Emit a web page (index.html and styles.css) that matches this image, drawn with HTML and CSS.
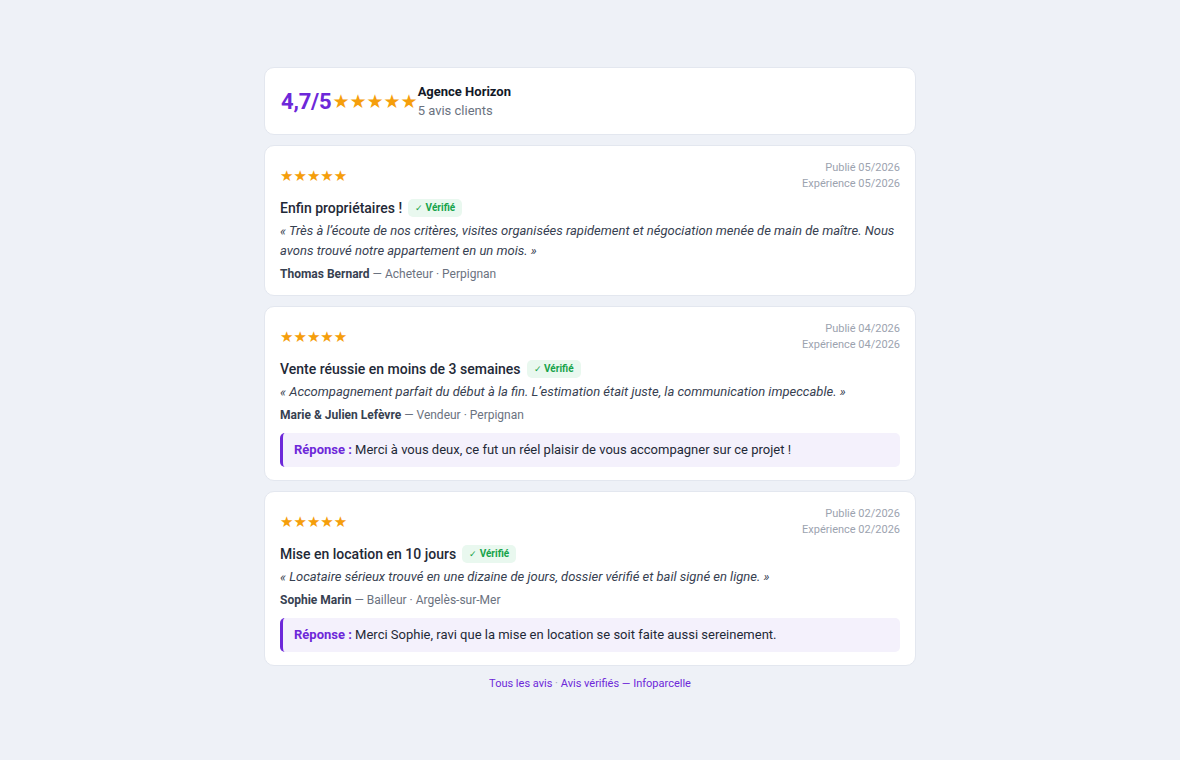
FILE: index.html
```html
<!DOCTYPE html>
<html lang="fr">
<head>
<meta charset="utf-8">
<title>Avis clients — Agence Horizon</title>
<link rel="stylesheet" href="styles.css">
</head>
<body>
<main class="wrap">
  <section class="card summary">
    <div class="score">4,7/5</div>
    <div class="stars stars-lg">★★★★★</div>
    <div class="agency">
      <div class="agency-name">Agence Horizon</div>
      <div class="agency-count">5 avis clients</div>
    </div>
  </section>

  <article class="card review">
    <div class="review-head">
      <div class="stars">★★★★★</div>
      <div class="dates"><div>Publié 05/2026</div><div>Expérience 05/2026</div></div>
    </div>
    <div class="title-row"><h3 class="title">Enfin propriétaires !</h3><span class="badge"><span class="check">✓</span> Vérifié</span></div>
    <p class="quote">« Très à l’écoute de nos critères, visites organisées rapidement et négociation menée de main de maître. Nous avons trouvé notre appartement en un mois. »</p>
    <div class="author"><strong>Thomas Bernard</strong> — Acheteur · Perpignan</div>
  </article>

  <article class="card review">
    <div class="review-head">
      <div class="stars">★★★★★</div>
      <div class="dates"><div>Publié 04/2026</div><div>Expérience 04/2026</div></div>
    </div>
    <div class="title-row"><h3 class="title">Vente réussie en moins de 3 semaines</h3><span class="badge"><span class="check">✓</span> Vérifié</span></div>
    <p class="quote">« Accompagnement parfait du début à la fin. L’estimation était juste, la communication impeccable. »</p>
    <div class="author"><strong>Marie &amp; Julien Lefèvre</strong> — Vendeur · Perpignan</div>
    <div class="reply"><strong>Réponse :</strong> Merci à vous deux, ce fut un réel plaisir de vous accompagner sur ce projet !</div>
  </article>

  <article class="card review">
    <div class="review-head">
      <div class="stars">★★★★★</div>
      <div class="dates"><div>Publié 02/2026</div><div>Expérience 02/2026</div></div>
    </div>
    <div class="title-row"><h3 class="title">Mise en location en 10 jours</h3><span class="badge"><span class="check">✓</span> Vérifié</span></div>
    <p class="quote">« Locataire sérieux trouvé en une dizaine de jours, dossier vérifié et bail signé en ligne. »</p>
    <div class="author"><strong>Sophie Marin</strong> — Bailleur · Argelès-sur-Mer</div>
    <div class="reply"><strong>Réponse :</strong> Merci Sophie, ravi que la mise en location se soit faite aussi sereinement.</div>
  </article>

  <footer class="foot"><a href="#">Tous les avis</a> · <a href="#">Avis vérifiés — Infoparcelle</a></footer>
</main>
</body>
</html>
```
FILE: styles.css
```css
* { box-sizing: border-box; }
html, body { margin: 0; padding: 0; }
body {
  background: #eef1f7;
  font-family: Roboto, "Liberation Sans", sans-serif;
  color: #1f2937;
}
.wrap {
  width: 652px;
  margin: 0 auto;
  padding-top: 67px;
  display: flex;
  flex-direction: column;
  gap: 10px;
}
.card {
  background: #fff;
  border: 1px solid #e3e7ef;
  border-radius: 10px;
}
.summary {
  display: flex;
  align-items: center;
  gap: 1px;
  padding: 15px 16px;
  height: 68px;
}
.score {
  font-size: 22px;
  font-weight: 700;
  color: #6d28d9;
  letter-spacing: -0.2px;
}
.stars {
  color: #f59e0b;
  font-family: "DejaVu Sans", sans-serif;
  font-size: 15px;
  letter-spacing: 0;
  line-height: 1;
}
.stars-lg { font-size: 19px; }
.agency { margin-top: 2px; margin-left: -1px; }
.agency-name { font-size: 13px; font-weight: 700; color: #111827; line-height: 18px; }
.agency-count { font-size: 13px; color: #6b7280; line-height: 20px; }

.review { padding: 14px 15px 13px 15px; }
.review-head {
  display: flex;
  justify-content: space-between;
  align-items: center;
}
.dates {
  text-align: right;
  font-size: 11px;
  line-height: 16px;
  color: #9ca3af;
}
.title-row {
  display: flex;
  align-items: center;
  gap: 6px;
  margin-top: 6px;
}
.title {
  margin: 0;
  font-size: 14px;
  font-weight: 500;
  color: #1f2937;
  line-height: 20px;
}
.badge {
  background: #e9f8ef;
  color: #16a34a;
  font-size: 10px;
  font-weight: 700;
  line-height: 18px;
  padding: 0 7px;
  border-radius: 5px;
}
.check { font-weight: 400; font-size: 9px; }
.quote {
  margin: 3px 0 0;
  font-size: 13px;
  font-style: italic;
  line-height: 20px;
  color: #374151;
}
.author {
  margin-top: 5px;
  font-size: 12px;
  line-height: 16px;
  color: #6b7280;
}
.author strong { color: #374151; font-weight: 700; }
.reply {
  margin-top: 10px;
  background: #f4f1fc;
  border-left: 3px solid #6d28d9;
  border-radius: 5px;
  padding: 0 11px;
  line-height: 34px;
  font-size: 13px;
  color: #1f2937;
}
.reply strong { color: #6d28d9; font-weight: 700; }
.foot {
  text-align: center;
  font-size: 11px;
  color: #9ca3af;
  margin-top: 0;
  line-height: 16px;
}
.foot a { color: #6d28d9; text-decoration: none; }
```
